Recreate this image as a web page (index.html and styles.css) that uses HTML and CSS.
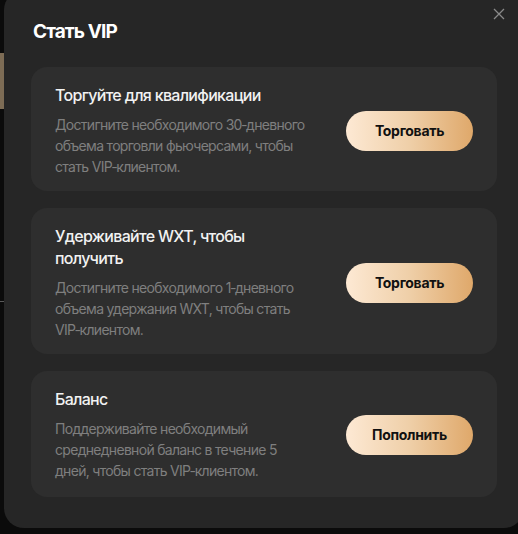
FILE: index.html
```html
<!DOCTYPE html>
<html lang="ru">
<head>
  <meta charset="UTF-8" />
  <meta name="viewport" content="width=device-width, initial-scale=1.0"/>
  <title>Стать VIP</title>
  <link rel="stylesheet" href="styles.css">
</head>
<body>

<!-- Страница под модальным окном -->
<div class="page">
  <div class="page-banner"></div>
  <div class="page-rule"></div>
</div>

<!-- Модальное окно -->
<div class="modal">
  <button class="modal-close" type="button" aria-label="Закрыть">
    <svg width="12" height="12" viewBox="0 0 12 12">
      <path d="M1 1 L11 11 M11 1 L1 11" stroke="currentColor" stroke-width="1.3" fill="none"/>
    </svg>
  </button>

  <h1 class="modal-title">Стать VIP</h1>

  <div class="vip-list">
    <div class="vip-card">
      <div class="vip-text">
        <h2>Торгуйте для квалификации</h2>
        <p>Достигните необходимого 30&#8209;дневного объема торговли фьючерсами, чтобы стать VIP&#8209;клиентом.</p>
      </div>
      <button class="vip-btn" type="button">Торговать</button>
    </div>

    <div class="vip-card">
      <div class="vip-text">
        <h2>Удерживайте WXT, чтобы получить</h2>
        <p>Достигните необходимого 1&#8209;дневного объема удержания WXT, чтобы стать VIP&#8209;клиентом.</p>
      </div>
      <button class="vip-btn" type="button">Торговать</button>
    </div>

    <div class="vip-card">
      <div class="vip-text">
        <h2>Баланс</h2>
        <p>Поддерживайте необходимый среднедневной баланс в течение 5 дней, чтобы стать VIP&#8209;клиентом.</p>
      </div>
      <button class="vip-btn" type="button">Пополнить</button>
    </div>
  </div>
</div>

</body>
</html>
```

FILE: styles.css
```css
html, body {
  margin: 0;
  height: 100%;
}
body {
  font-family: Inter, "Noto Sans", sans-serif;
  background: #0b0b0b;
  overflow: hidden;
  position: relative;
}
.page {
  height: 100%;
}
.page-banner {
  position: absolute;
  left: 0;
  top: 53px;
  width: 10px;
  height: 56px;
  background: #7d6c55;
}
.page-rule {
  position: absolute;
  left: 0;
  top: 301px;
  width: 10px;
  height: 1px;
  background: #5a5a5a;
}
.modal {
  position: absolute;
  left: 4px;
  top: -10px;
  width: 520px;
  box-sizing: border-box;
  padding: 30px 27px 31px;
  background: #262626;
  border-radius: 20px;
}
.modal-close {
  position: absolute;
  top: 18px;
  right: 19px;
  padding: 0;
  border: none;
  background: none;
  color: #8a8a8a;
  cursor: pointer;
  display: flex;
}
.modal-title {
  margin: 0 0 23px 2px;
  font-size: 19px;
  line-height: 24px;
  font-weight: 700;
  color: #fff;
  letter-spacing: -0.9px;
}
.vip-list {
  display: flex;
  flex-direction: column;
  gap: 17px;
}
.vip-card {
  display: flex;
  align-items: center;
  gap: 37px;
  padding: 17px 24px 14px;
  background: #2e2e2e;
  border-radius: 16px;
}
.vip-card:last-child {
  padding-bottom: 16px;
}
.vip-text {
  flex: 1;
}
.vip-text h2 {
  margin: 0;
  font-size: 16px;
  line-height: 22px;
  font-weight: 500;
  color: #f2f2f2;
  letter-spacing: -0.7px;
}
.vip-text p {
  margin: 8px 0 0;
  font-size: 14px;
  line-height: 21px;
  color: #7f7f7f;
  letter-spacing: -0.7px;
}
.vip-btn {
  flex: none;
  width: 127px;
  height: 40px;
  border: none;
  border-radius: 20px;
  background: linear-gradient(90deg, #fde9d4 0%, #efcfa8 50%, #dfa86a 100%);
  color: #111;
  font-family: inherit;
  font-size: 14px;
  font-weight: 700;
  letter-spacing: -0.3px;
  cursor: pointer;
}
.vip-btn:hover {
  opacity: 0.9;
}
```
